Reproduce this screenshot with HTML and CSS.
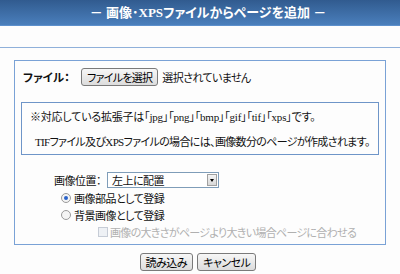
FILE: index.html
```html
<!DOCTYPE html>
<html lang="ja">
<head>
  <meta charset="UTF-8">
  <title>画像・XPSファイルからページを追加</title>
  <link rel="stylesheet" href="styles.css">
</head>
<body>
  <div class="title-bar">
    <h1>－ 画像･XPSファイルからページを追加 －</h1>
  </div>
  <div class="sub-bar"></div>

  <div class="panel">
    <div class="file-row">
      <span class="file-label">ファイル：</span>
      <span class="btn file-btn">ファイルを選択</span>
      <span class="file-name">選択されていません</span>
    </div>

    <div class="note">
      <p>※対応している拡張子は「jpg」「png」「bmp」「gif」「tif」「xps」です。</p>
      <p class="note-sub">TIFファイル及びXPSファイルの場合には、画像数分のページが作成されます。</p>
    </div>

    <div class="options">
      <div class="pos-row">
        <span class="pos-label">画像位置：</span>
        <div class="select">
          <span>左上に配置</span>
          <span class="select-arrow"></span>
        </div>
      </div>
      <label class="radio"><span class="radio-dot checked"></span>画像部品として登録</label>
      <label class="radio"><span class="radio-dot"></span>背景画像として登録</label>
      <label class="check disabled"><span class="check-box"></span>画像の大きさがページより大きい場合ページに合わせる</label>
    </div>
  </div>

  <div class="actions">
    <span class="btn">読み込み</span>
    <span class="btn">キャンセル</span>
  </div>
</body>
</html>
```

FILE: styles.css
```css
:root {
  --line-color: #8fb0da;
  --box-border: #7aa2d6;
  --text-color: #111;
}

body {
  margin: 0;
  background-color: #fdfdfd;
  color: var(--text-color);
  font-family: "Liberation Serif", "Noto Sans CJK JP", serif;
  font-size: 11px;
  font-feature-settings: "palt";
  white-space: nowrap;
}

p {
  margin: 0;
}

.title-bar {
  height: 25px;
  background: linear-gradient(#315b8f, #4a7fbc);
  border-bottom: 1px solid #5d90cc;
  display: flex;
  align-items: center;
  justify-content: center;
}

.title-bar h1 {
  margin: 0 0 0 16px;
  color: #fff;
  font-size: 13px;
  font-weight: bold;
  line-height: 1;
}

.sub-bar {
  height: 21px;
  border-bottom: 1px solid var(--line-color);
}

.panel {
  margin: 12px 14px 0;
  border: 1px solid var(--box-border);
  padding: 7px 6px 4px;
}

.file-row {
  display: flex;
  align-items: center;
  padding-left: 2px;
  height: 18px;
  font-family: "Noto Sans CJK JP", sans-serif;
}

.file-label {
  font-weight: bold;
  font-size: 11.5px;
  width: 58px;
}

.file-name {
  margin-left: 4px;
  letter-spacing: -0.6px;
}

.btn {
  display: inline-flex;
  align-items: center;
  justify-content: center;
  height: 16px;
  padding: 0 5px;
  border: 1px solid #7a7a7a;
  border-radius: 3px;
  background: linear-gradient(#f7f7f7, #dcdcdc);
  font-family: "Noto Sans CJK JP", sans-serif;
  font-size: 11px;
  letter-spacing: -0.5px;
  color: #000;
}

.file-btn {
  letter-spacing: -0.7px;
}

.note {
  margin-top: 16px;
  border: 1px solid #6e95c8;
  padding: 5px 0 2px 8px;
}

.note p {
  line-height: 19px;
  height: 19px;
  letter-spacing: -0.2px;
}

.note .note-sub {
  padding-left: 5px;
  margin-top: 6px;
  letter-spacing: -0.65px;
}

.options {
  margin: 16px 0 0 33px;
  display: flex;
  flex-direction: column;
  font-family: "Noto Sans CJK JP", sans-serif;
  letter-spacing: -0.5px;
}

.pos-row {
  display: flex;
  align-items: center;
  height: 18px;
}

.pos-label {
  width: 53px;
}

.select {
  position: relative;
  width: 106px;
  height: 14px;
  border: 1px solid #7f9db9;
  background: #fff;
  padding-left: 4px;
  line-height: 14px;
}

.select-arrow {
  position: absolute;
  right: 1px;
  top: 1px;
  width: 10px;
  height: 12px;
  background: linear-gradient(#f4f4f4, #d8d8d8);
  border: 1px solid #a0a0a0;
  box-sizing: border-box;
}

.select-arrow::after {
  content: "";
  position: absolute;
  left: 2px;
  top: 4px;
  border-left: 2px solid transparent;
  border-right: 2px solid transparent;
  border-top: 3px solid #000;
}

.radio, .check {
  display: flex;
  align-items: center;
  height: 17px;
  margin-left: 7px;
}

.radio-dot {
  width: 8px;
  height: 8px;
  border: 1px solid #9a9a9a;
  border-radius: 50%;
  background: #f4f4f4;
  margin-right: 3px;
  position: relative;
}

.radio-dot.checked::after {
  content: "";
  position: absolute;
  left: 2px;
  top: 2px;
  width: 4px;
  height: 4px;
  border-radius: 50%;
  background: #2a62c9;
}

.check {
  margin-left: 44px;
  color: #b0b0b0;
  letter-spacing: -0.7px;
}

.check-box {
  width: 8px;
  height: 8px;
  border: 1px solid #c6ccd6;
  background: #eef1f5;
  margin-right: 2px;
}

.actions {
  display: flex;
  justify-content: center;
  gap: 4px;
  margin: 8px 4px 0 0;
}
```
